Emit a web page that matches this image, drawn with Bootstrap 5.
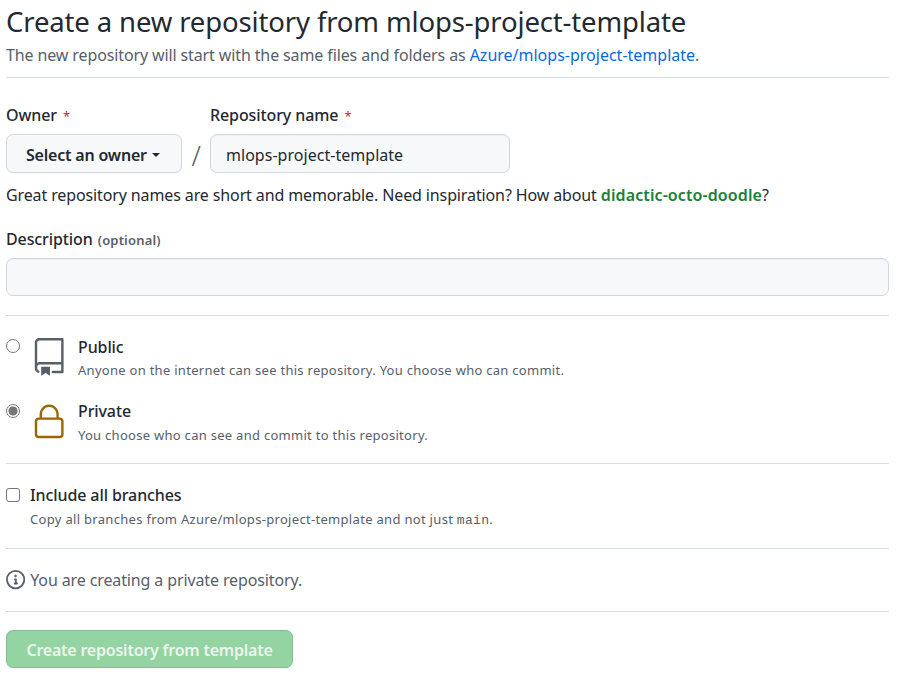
<!DOCTYPE html>
<html lang="en">
<head>
<meta charset="utf-8">
<meta name="viewport" content="width=device-width, initial-scale=1">
<title>Create a new repository</title>
<link href="https://cdn.jsdelivr.net/npm/bootstrap@5.3.0/dist/css/bootstrap.min.css" rel="stylesheet">
<style>
body{font-family:"Segoe UI","Noto Sans",sans-serif;font-size:16px;line-height:24px;color:#24292f;background:#fff;letter-spacing:-.12px}
.page{padding:4px 9px 0 6px}
.page-title{font-size:27.5px;line-height:36px;font-weight:400;letter-spacing:-.14px}
.sub{margin-top:3px}
.muted{color:#57606a}
.link-blue{color:#0969da;letter-spacing:0}
.rule{height:1px;background:#d8dee4}
.head-rule{margin-top:10px}
.strong{font-weight:500;font-size:16px;line-height:24px;letter-spacing:-.1px}
.req{color:#cf222e;font-weight:400;font-size:13px;line-height:1;margin-left:2px}
.note{font-size:13px;line-height:20px;color:#57606a;letter-spacing:.28px}
.opt{font-size:13px;color:#57606a;font-weight:600;letter-spacing:.18px;margin-left:1px}
.field,.field:focus{background:#f6f8fa;border:1px solid #d0d7de;border-radius:7px;box-shadow:inset 0 1px 0 rgba(208,215,222,.2);color:#24292f;padding:2px 15px 0;font-size:16px;letter-spacing:.03px}
.name-field{width:300px;height:39px}
.desc-field{height:38px;margin:6px 0 19px}
.owner-btn,.owner-btn:hover{width:176px;height:39px;background:#f6f8fa;border:1px solid #d5d8da;border-radius:7px;color:#24292f;padding:2px 0 0 19px;font-weight:600;letter-spacing:-.2px;box-shadow:0 1px 0 rgba(27,31,36,.04)}
.owner-btn::after{margin-left:5px;border-width:4.5px 4.5px 0;border-style:solid;border-color:currentColor transparent transparent}
.slash{width:28px;font-size:27px;font-weight:300;line-height:34px}
.names{padding-top:25px}
.names-label{margin-bottom:7px}
.help{margin:10px 0 20px}
.green{color:#1a7f37;font-weight:600;letter-spacing:.1px}
.choice{width:14px;height:14px;margin:4px 0 0;border:1px solid #767676;background:#fff;flex:none}
.form-check-input.choice[type=radio]:checked{background:radial-gradient(circle,#767676 0 4.2px,#fff 4.9px);border-color:#767676}
.form-check-input.choice[type=checkbox]{border-radius:3px;margin-top:5px}
.options{margin-top:19px}
.option-public{height:65px}
.option-private{height:63px}
.option-private .strong{margin:-1px 0 2px}
.big-icon{width:38.4px;height:38.4px;flex:none;fill:currentColor;margin:3px 3.6px 0 10px}
.lock{color:#9a6700}
.option-public .note{margin-top:1px}
.option-text{margin-left:6px}
.branches{margin:19px 0 17px;gap:10px}
.branches .note{margin-top:2px;letter-spacing:.31px}
.info{margin:19px 0;gap:5px}
.info svg{width:19.2px;height:19.2px;fill:currentColor}
.code{font-family:Consolas,"Liberation Mono",monospace;font-size:13px}
.submit,.submit:disabled{width:287px;height:38px;margin-top:18px;background:#94d3a2;border:1px solid #84bd91;border-radius:7px;color:#eaf6ed;opacity:1;padding:2px 0 0;font-weight:600;letter-spacing:-.22px}
</style>
<script src="https://cdn.jsdelivr.net/npm/bootstrap@5.3.0/dist/js/bootstrap.bundle.min.js" defer></script>
</head>
<body>
<main class="page">
  <h1 class="page-title mb-0">Create a new repository from mlops-project-template</h1>
  <p class="muted sub mb-0">The new repository will start with the same files and folders as <a class="link-blue text-decoration-none" href="#">Azure/mlops-project-template</a>.</p>
  <div class="rule head-rule"></div>
  <form>
    <div class="names d-flex align-items-end">
      <div>
        <div class="strong names-label">Owner <span class="req">*</span></div>
        <button type="button" class="btn strong owner-btn dropdown-toggle d-flex align-items-center">Select an owner</button>
      </div>
      <div class="slash muted text-center">/</div>
      <div>
        <label class="strong names-label d-block" for="name">Repository name <span class="req">*</span></label>
        <input id="name" class="form-control field name-field" value="mlops-project-template">
      </div>
    </div>
    <p class="help">Great repository names are short and memorable. Need inspiration? How about <b class="strong green">didactic-octo-doodle</b>?</p>
    <label class="strong d-block" for="desc">Description <span class="opt">(optional)</span></label>
    <input id="desc" class="form-control field desc-field">
    <div class="rule"></div>
    <div class="options">
      <div class="option-public d-flex">
        <input class="form-check-input choice" type="radio" name="vis" aria-label="Public">
        <svg class="big-icon muted" viewBox="0 0 24 24"><path fill-rule="evenodd" d="M3 2.75A2.75 2.75 0 015.75 0h14.5a.75.75 0 01.75.75v20.5a.75.75 0 01-.75.75h-6a.75.75 0 010-1.5h5.25v-4H6A1.5 1.5 0 004.5 18v.75c0 .716.43 1.334 1.05 1.605a.75.75 0 01-.6 1.374A3.25 3.25 0 013 18.75v-16zM19.5 1.5V15H6c-.546 0-1.059.146-1.5.401V2.75c0-.69.56-1.25 1.25-1.25H19.5z"/><path d="M7 18.25a.25.25 0 01.25-.25h5a.25.25 0 01.25.25v5.01a.25.25 0 01-.397.201l-2.206-1.604a.25.25 0 00-.294 0L7.397 23.46a.25.25 0 01-.397-.2v-5.01z"/></svg>
        <div class="option-text"><div class="strong">Public</div><div class="note">Anyone on the internet can see this repository. You choose who can commit.</div></div>
      </div>
      <div class="option-private d-flex">
        <input class="form-check-input choice" type="radio" name="vis" aria-label="Private" checked>
        <svg class="big-icon lock" viewBox="0 0 24 24"><path fill-rule="evenodd" d="M6 9V7.25C6 3.845 8.503 1 12 1s6 2.845 6 6.25V9h.5a2.5 2.5 0 012.5 2.5v8a2.5 2.5 0 01-2.5 2.5h-13A2.5 2.5 0 013 19.5v-8A2.5 2.5 0 015.5 9H6zm1.5-1.75C7.5 4.58 9.422 2.5 12 2.5c2.578 0 4.5 2.08 4.5 4.75V9h-9V7.25zm-3 4.25a1 1 0 011-1h13a1 1 0 011 1v8a1 1 0 01-1 1h-13a1 1 0 01-1-1v-8z"/></svg>
        <div class="option-text"><div class="strong">Private</div><div class="note">You choose who can see and commit to this repository.</div></div>
      </div>
    </div>
    <div class="rule"></div>
    <div class="branches d-flex">
      <input class="form-check-input choice" type="checkbox" id="all">
      <div><label class="strong d-block" for="all">Include all branches</label><div class="note">Copy all branches from Azure/mlops-project-template and not just <span class="code">main</span>.</div></div>
    </div>
    <div class="rule"></div>
    <div class="info muted d-flex align-items-center">
      <svg viewBox="0 0 16 16"><path fill-rule="evenodd" d="M8 1.5a6.5 6.5 0 100 13 6.5 6.5 0 000-13zM0 8a8 8 0 1116 0A8 8 0 010 8zm6.5-.25A.75.75 0 017.25 7h1a.75.75 0 01.75.75v2.75h.25a.75.75 0 010 1.5h-2a.75.75 0 010-1.5h.25v-2h-.25a.75.75 0 01-.75-.75zM8 6a1 1 0 100-2 1 1 0 000 2z"/></svg>
      <span>You are creating a private repository.</span>
    </div>
    <div class="rule"></div>
    <button type="button" class="btn strong submit" disabled>Create repository from template</button>
  </form>
</main>
</body>
</html>
